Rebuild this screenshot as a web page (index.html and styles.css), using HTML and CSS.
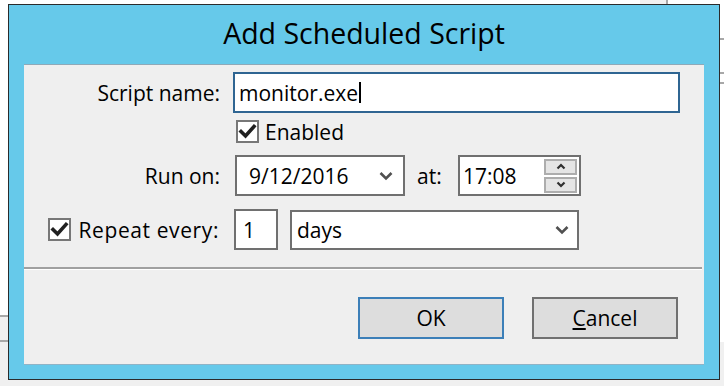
FILE: index.html
```html
<!DOCTYPE html>
<html>
<head>
<meta charset="utf-8">
<title>Add Scheduled Script</title>
<link rel="stylesheet" href="styles.css">
</head>
<body>
<div class="window">
  <div class="titlebar">Add Scheduled Script</div>
  <div class="client">
    <div class="form">
      <div class="row row-name">
        <label class="label">Script name:</label>
        <div class="textbox focused"><span>monitor.exe</span><span class="caret"></span></div>
      </div>
      <div class="row row-enabled">
        <div class="check-wrap">
          <span class="checkbox"><svg viewBox="0 0 19 19" width="19" height="19"><path d="M3 9.5 L7.5 14 L16 4.5" fill="none" stroke="#202020" stroke-width="3.6" stroke-linecap="square"/></svg></span>
          <span class="check-label">Enabled</span>
        </div>
      </div>
      <div class="row row-run">
        <label class="label">Run on:</label>
        <div class="select date"><span>9/12/2016</span><svg class="chev" viewBox="0 0 14 10" width="14" height="10"><path d="M1.5 2 L7 7.5 L12.5 2" fill="none" stroke="#505050" stroke-width="2.6"/></svg></div>
        <span class="at">at:</span>
        <div class="select time"><span>17:08</span>
          <div class="spin">
            <div class="spin-btn"><svg viewBox="0 0 10 7" width="10" height="7"><path d="M1.5 5.5 L5 2 L8.5 5.5" fill="none" stroke="#303030" stroke-width="2.2"/></svg></div>
            <div class="spin-btn"><svg viewBox="0 0 10 7" width="10" height="7"><path d="M1.5 1.5 L5 5 L8.5 1.5" fill="none" stroke="#303030" stroke-width="2.2"/></svg></div>
          </div>
        </div>
      </div>
      <div class="row row-repeat">
        <div class="repeat-label">
          <span class="checkbox"><svg viewBox="0 0 19 19" width="19" height="19"><path d="M3 9.5 L7.5 14 L16 4.5" fill="none" stroke="#202020" stroke-width="3.6" stroke-linecap="square"/></svg></span>
          <span class="check-label repeat-text">Repeat every:</span>
        </div>
        <div class="textbox number"><span>1</span></div>
        <div class="select days"><span>days</span><svg class="chev" viewBox="0 0 14 10" width="14" height="10"><path d="M1.5 2 L7 7.5 L12.5 2" fill="none" stroke="#505050" stroke-width="2.6"/></svg></div>
      </div>
    </div>
    <div class="separator"></div>
    <div class="buttons">
      <button class="btn default">OK</button>
      <button class="btn"><u>C</u>ancel</button>
    </div>
  </div>
</div>
</body>
</html>
```
FILE: styles.css
```css
html, body {
  margin: 0;
  padding: 0;
}
body {
  width: 724px;
  height: 386px;
  overflow: hidden;
  background:
    linear-gradient(#a8a8a8, #a8a8a8) 0 315px / 8px 2px no-repeat,
    linear-gradient(#a8a8a8, #a8a8a8) 0 340px / 8px 2px no-repeat,
    linear-gradient(#f0f0f0, #f0f0f0) 0 317px / 8px 23px no-repeat,
    linear-gradient(#a8a8a8, #a8a8a8) 720px 38px / 4px 2px no-repeat,
    linear-gradient(#a8a8a8, #a8a8a8) 720px 72px / 4px 2px no-repeat,
    linear-gradient(#a8a8a8, #a8a8a8) 720px 82px / 4px 2px no-repeat,
    linear-gradient(#a8a8a8, #a8a8a8) 666px 0 / 2px 4px no-repeat,
    linear-gradient(#f0f0f0, #f0f0f0) 640px 0 / 26px 4px no-repeat,
    linear-gradient(to bottom, #ffffff 0, #ffffff 342px, #f0f0f0 342px);
  font-family: "Open Sans", "Noto Sans", sans-serif;
  color: #000;
}
.window {
  margin: 4px 0 0 8px;
  width: 712px;
  height: 376px;
  box-sizing: border-box;
  border: 1px solid #2b2b2b;
  background: #66c9ea;
  padding: 0 15px 15px 15px;
}
.titlebar {
  height: 60px;
  box-sizing: border-box;
  padding-top: 8px;
  text-align: center;
  font-size: 28.5px;
  line-height: 40px;
  color: #000;
}
.client {
  width: 680px;
  height: 299px;
  background: #efefef;
  box-shadow: 0 -1px 0 #8fa9b8, 0 1px 0 #8fb3c6;
}
.form {
  padding-top: 7px;
  font-size: 21px;
}
.row {
  display: flex;
  align-items: center;
}
.label {
  width: 196px;
  text-align: right;
  flex: none;
}
.row-name .textbox {
  margin-left: 13px;
  width: 447px;
  height: 41px;
}
.textbox, .select {
  box-sizing: border-box;
  background: #fff;
  border: 2px solid #707070;
  display: flex;
  align-items: center;
  line-height: 24px;
}
.textbox.focused {
  border-color: #2f6592;
  padding-left: 4px;
}
.caret {
  display: inline-block;
  width: 2px;
  height: 21px;
  background: #000;
  margin-left: 1px;
}
.row-enabled {
  margin-top: 7px;
  height: 23px;
  padding-left: 212px;
}
.check-wrap, .repeat-label {
  display: flex;
  align-items: center;
}
.checkbox {
  width: 23px;
  height: 23px;
  box-sizing: border-box;
  border: 2px solid #777;
  background: #fff;
  display: flex;
  align-items: center;
  justify-content: center;
  flex: none;
}
.check-label {
  margin-left: 6px;
}
.repeat-text {
  letter-spacing: 0.6px;
}
.row-run {
  margin-top: 12px;
  height: 41px;
}
.select.date {
  margin-left: 15px;
  width: 170px;
  height: 41px;
  padding-left: 12px;
  padding-right: 10px;
  justify-content: space-between;
}
.at {
  margin-left: 12px;
  width: 27px;
}
.select.time {
  margin-left: 14px;
  width: 123px;
  height: 41px;
  padding-left: 3px;
  padding-right: 2px;
  justify-content: space-between;
}
.spin {
  display: flex;
  flex-direction: column;
  gap: 2px;
}
.spin-btn {
  width: 33px;
  height: 16px;
  box-sizing: border-box;
  border: 2px solid #adadad;
  background: #e5e5e5;
  display: flex;
  align-items: center;
  justify-content: center;
}
.row-repeat {
  margin-top: 13px;
  height: 41px;
}
.repeat-label {
  width: 195px;
  padding-left: 24px;
  box-sizing: border-box;
  flex: none;
  justify-content: space-between;
  margin-right: 15px;
}
.textbox.number {
  width: 44px;
  height: 41px;
  padding-left: 7px;
}
.select.days {
  margin-left: 12px;
  width: 289px;
  height: 40px;
  padding-left: 5px;
  padding-right: 8px;
  justify-content: space-between;
}
.separator {
  margin-top: 17px;
  width: 678px;
  height: 2px;
  background: #a0a0a0;
  border-bottom: 1px solid #fff;
}
.buttons {
  display: flex;
  justify-content: flex-end;
  gap: 28px;
  padding-right: 26px;
  margin-top: 27px;
}
.btn {
  width: 146px;
  height: 42px;
  box-sizing: border-box;
  border: 2px solid #707070;
  background: #dddddd;
  font-family: "Open Sans", "Noto Sans", sans-serif;
  font-size: 21px;
  color: #000;
  padding: 0;
  line-height: 24px;
}
.btn.default {
  border-color: #3c7fb8;
}
```
